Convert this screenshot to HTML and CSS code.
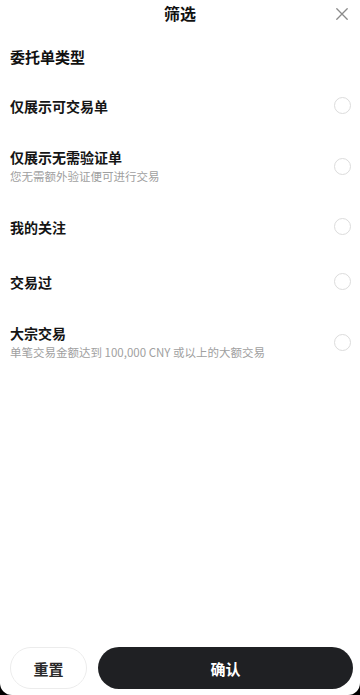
FILE: index.html
```html
<!DOCTYPE html>
<html lang="zh-CN">
<head>
<meta charset="utf-8">
<meta name="viewport" content="width=device-width, initial-scale=1">
<title>筛选</title>
<link rel="stylesheet" href="styles.css">
</head>
<body>
<div class="sheet">
  <header class="header">
    <h1 class="title">筛选</h1>
    <button class="close" aria-label="关闭">
      <svg width="12" height="12" viewBox="0 0 12 12"><path d="M0.8 0.8 L11.2 11.2 M11.2 0.8 L0.8 11.2" stroke="#8a8a8a" stroke-width="1.3" fill="none" stroke-linecap="round"/></svg>
    </button>
  </header>
  <h2 class="section">委托单类型</h2>
  <ul class="list">
    <li class="row"><div class="text"><div class="name">仅展示可交易单</div></div><span class="radio"></span></li>
    <li class="row"><div class="text"><div class="name">仅展示无需验证单</div><div class="desc">您无需额外验证便可进行交易</div></div><span class="radio"></span></li>
    <li class="row"><div class="text"><div class="name">我的关注</div></div><span class="radio"></span></li>
    <li class="row"><div class="text"><div class="name">交易过</div></div><span class="radio"></span></li>
    <li class="row"><div class="text"><div class="name">大宗交易</div><div class="desc">单笔交易金额达到 100,000 CNY 或以上的大额交易</div></div><span class="radio"></span></li>
  </ul>
  <div class="spacer"></div>
  <footer class="footer">
    <button class="btn reset">重置</button>
    <button class="btn confirm">确认</button>
  </footer>
</div>
</body>
</html>
```
FILE: styles.css
```css
* { box-sizing: border-box; }
html, body { margin: 0; padding: 0; }
body {
  background: #000;
  font-family: "Noto Sans CJK SC", "Noto Sans", sans-serif;
  color: #1a1a1a;
}
.sheet {
  width: 360px;
  height: 695px;
  background: #fff;
  border-radius: 0 0 12px 12px;
  display: flex;
  flex-direction: column;
  overflow: hidden;
}
.header {
  position: relative;
  height: 27px;
  display: flex;
  align-items: center;
  justify-content: center;
}
.title {
  margin: 0;
  font-size: 16px;
  font-weight: 700;
  line-height: 27px;
  color: #111;
}
.close {
  position: absolute;
  right: 11px;
  top: 7px;
  width: 14px;
  height: 14px;
  padding: 0;
  border: 0;
  background: none;
  display: flex;
  align-items: center;
  justify-content: center;
}
.section {
  margin: 19px 0 0;
  padding-left: 10px;
  font-size: 15px;
  font-weight: 700;
  line-height: 22px;
  color: #111;
}
.list {
  list-style: none;
  margin: 10px 0 0;
  padding: 0;
}
.row {
  display: flex;
  align-items: center;
  justify-content: space-between;
  min-height: 55px;
  padding: 14px 9px 14px 10px;
}
.name {
  font-size: 14px;
  font-weight: 700;
  line-height: 20px;
  color: #151515;
}
.desc {
  font-size: 11.5px;
  line-height: 18px;
  color: #a0a0a0;
}
.radio {
  width: 17px;
  height: 17px;
  border: 1.5px solid #dcdcdc;
  border-radius: 50%;
  flex-shrink: 0;
}
.spacer { flex: 1; }
.footer {
  display: flex;
  gap: 11px;
  padding: 0 7px 6px 10px;
}
.btn {
  height: 42px;
  border-radius: 21px;
  font-family: inherit;
  font-size: 15px;
  font-weight: 700;
  padding: 0;
}
.reset {
  width: 77px;
  background: #fff;
  border: 1px solid #ececec;
  color: #2a2a2a;
}
.confirm {
  flex: 1;
  background: #1f2023;
  border: 0;
  color: #fff;
}
```
